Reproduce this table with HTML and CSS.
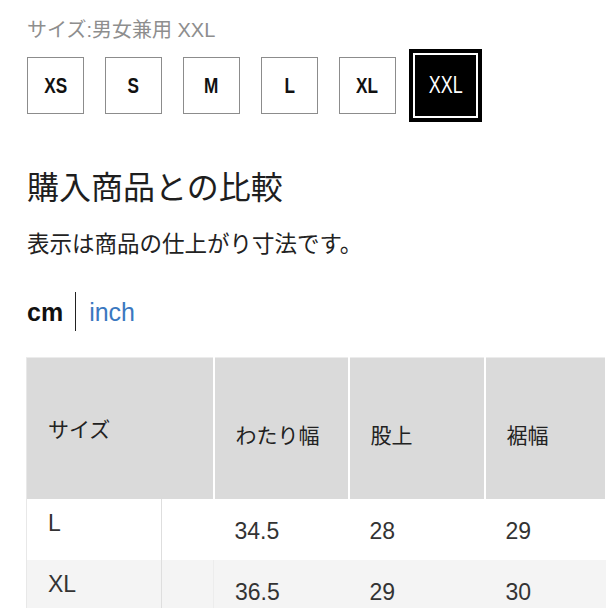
FILE: index.html
```html
<!DOCTYPE html>
<html lang="ja">
<head>
<meta charset="utf-8">
<link rel="stylesheet" href="styles.css">
</head>
<body>
<div class="page">
  <div class="size-label">サイズ:男女兼用 XXL</div>
  <div class="sizes">
    <div class="size-box"><span>XS</span></div>
    <div class="size-box"><span>S</span></div>
    <div class="size-box"><span>M</span></div>
    <div class="size-box"><span>L</span></div>
    <div class="size-box"><span>XL</span></div>
    <div class="size-box selected"><span>XXL</span></div>
  </div>
  <h2 class="heading">購入商品との比較</h2>
  <p class="note">表示は商品の仕上がり寸法です。</p>
  <div class="units">
    <span class="unit active">cm</span>
    <span class="sep"></span>
    <span class="unit link">inch</span>
  </div>
  <table class="chart">
    <colgroup>
      <col class="c-a"><col class="c-b"><col class="c-c"><col class="c-d"><col class="c-e">
    </colgroup>
    <thead>
      <tr>
        <th colspan="2" class="first">サイズ</th>
        <th>わたり幅</th>
        <th>股上</th>
        <th>裾幅</th>
      </tr>
    </thead>
    <tbody>
      <tr>
        <td class="a">L</td>
        <td class="b"></td>
        <td>34.5</td>
        <td>28</td>
        <td>29</td>
      </tr>
      <tr class="alt">
        <td class="a">XL</td>
        <td class="b"></td>
        <td>36.5</td>
        <td>29</td>
        <td>30</td>
      </tr>
    </tbody>
  </table>
</div>
</body>
</html>
```

FILE: styles.css
```css
html, body {
  margin: 0;
  padding: 0;
  background: #fff;
  overflow: hidden;
}
body {
  width: 608px;
  height: 608px;
  font-family: "Liberation Sans", "Noto Sans CJK JP", sans-serif;
  color: #222;
}
.page {
  padding: 18px 0 0 27px;
}
.size-label {
  font-size: 20px;
  line-height: 24px;
  color: #8e8e8e;
}
.sizes {
  display: flex;
  gap: 21px;
  margin-top: 15px;
}
.size-box {
  width: 57px;
  height: 57px;
  box-sizing: border-box;
  border: 1px solid #8c8c8c;
  display: flex;
  align-items: center;
  justify-content: center;
  background: #fff;
}
.size-box span {
  display: inline-block;
  font-family: "Liberation Sans", sans-serif;
  font-weight: bold;
  font-size: 22px;
  transform: scaleX(0.78);
  color: #111;
}
.size-box.selected {
  background: #000;
  border-color: #000;
  box-shadow: 0 0 0 2px #000, 0 0 0 4px #fff, 0 0 0 8px #000;
}
.size-box.selected span {
  color: #fff;
  font-weight: normal;
  font-size: 23px;
}
.heading {
  margin: 54px 0 0 0;
  font-size: 32px;
  line-height: 40px;
  font-weight: normal;
  color: #1e1e1e;
}
.note {
  margin: 23px 0 0 0;
  font-size: 22.5px;
  line-height: 28px;
  color: #222;
}
.units {
  display: flex;
  align-items: center;
  height: 39px;
  margin-top: 33px;
}
.unit {
  font-size: 25px;
  line-height: 28px;
}
.unit.active {
  font-weight: bold;
  color: #111;
}
.sep {
  width: 1px;
  height: 39px;
  background: #222;
  margin: 0 13px 0 12px;
}
.unit.link {
  color: #3a78c0;
}
.chart {
  margin: 26px 0 0 -1px;
  border-collapse: collapse;
  table-layout: fixed;
  width: 580px;
  border-left: 1px solid #e8e8e8;
}
.c-a { width: 135px; }
.c-b { width: 52px; }
.c-c { width: 135px; }
.c-d { width: 136px; }
.c-e { width: 121px; }
.chart th {
  height: 141px;
  padding: 12px 0 0 21px;
  box-sizing: border-box;
  background: #dadada;
  border-right: 2px solid #fff;
  border-top: 1px solid #ececec;
  text-align: left;
  vertical-align: middle;
  font-weight: normal;
  font-size: 21px;
  color: #222;
}
.chart th.first {
  padding-top: 0;
}
.chart td {
  height: 61px;
  box-sizing: border-box;
  padding: 19px 0 0 21px;
  vertical-align: top;
  font-size: 23px;
  line-height: 26px;
  color: #333;
  background: #fff;
}
.chart td.a {
  padding-top: 11px;
  border-right: 1px solid #dedede;
}
.chart tr.alt td {
  background: #f4f4f4;
}
.chart tr.alt td.b {
  border-right: 1px solid #ececec;
}
```
